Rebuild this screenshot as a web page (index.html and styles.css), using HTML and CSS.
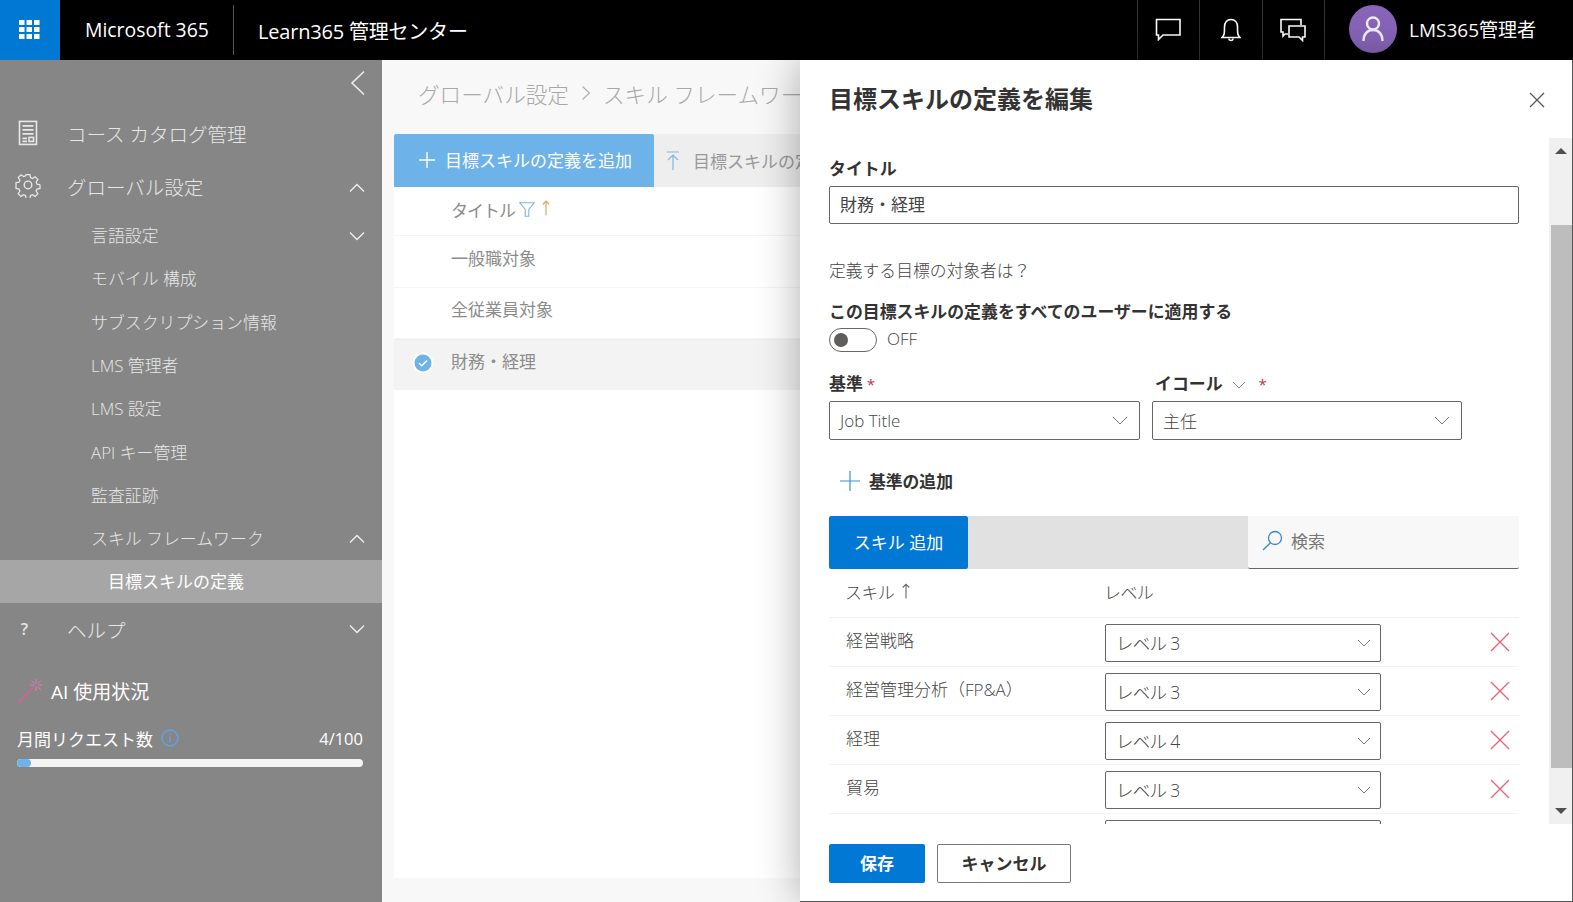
FILE: index.html
```html
<!DOCTYPE html>
<html lang="ja">
<head>
<meta charset="utf-8">
<title>Learn365 管理センター</title>
<link rel="stylesheet" href="styles.css">
</head>
<body>
<div class="app">
  <header class="topbar">
    <div class="waffle">
      <svg width="22" height="20" viewBox="0 0 22 20" fill="#fff"><rect x="0" y="0" width="5.5" height="5"/><rect x="7.5" y="0" width="5.5" height="5"/><rect x="15" y="0" width="5.5" height="5"/><rect x="0" y="7" width="5.5" height="5"/><rect x="7.5" y="7" width="5.5" height="5"/><rect x="15" y="7" width="5.5" height="5"/><rect x="0" y="14" width="5.5" height="5"/><rect x="7.5" y="14" width="5.5" height="5"/><rect x="15" y="14" width="5.5" height="5"/></svg>
    </div>
    <div class="brand">Microsoft 365</div>
    <div class="appname">Learn365 管理センター</div>
    <div class="topicons">
      <div class="topicon"><svg width="26" height="24" viewBox="0 0 26 24" fill="none" stroke="#fff" stroke-width="1.6"><path d="M1.500 1.500H25V17H8L3.500 21.500V17H1.500Z"/></svg></div>
      <div class="topicon"><svg width="20" height="24" viewBox="0 0 20 24" fill="none" stroke="#fff" stroke-width="1.6"><path d="M1 19.500C3.500 17.500 3.500 15 3.500 9C3.500 4.500 6 1.500 10 1.500S16.500 4.500 16.500 9C16.500 15 16.500 17.500 19 19.500Z"/><path d="M8 20.500a2 2 0 0 0 4 0"/></svg></div>
      <div class="topicon"><svg width="26" height="24" viewBox="0 0 26 24" fill="none" stroke="#fff" stroke-width="1.600"><path d="M8 16H5L3 18V14H1V1.500H21V7"/><path d="M9 8H25V19H22.500V22.500L19 19H9Z"/></svg></div>
      <div class="profile">
        <div class="avatar"><svg width="22" height="26" viewBox="0 0 22 26" fill="none" stroke="#f2eef8" stroke-width="2.400"><circle cx="11" cy="7.500" r="6"/><path d="M1.500 25C1.500 18 5.500 14 11 14S20.500 18 20.500 25"/></svg></div>
        <span>LMS365管理者</span>
      </div>
    </div>
  </header>

  <div class="workspace">
    <nav class="sidebar">
      <div class="collapse"><svg width="16" height="26" viewBox="0 0 16 26" fill="none" stroke="#f0f0f0" stroke-width="1.500"><path d="M14 1.500L2 13L14 24.500"/></svg></div>
      <div class="nav-main">
        <svg class="nav-icon" width="20" height="26" viewBox="0 0 20 26" fill="none" stroke="#e8e8e8" stroke-width="1.600"><rect x="1.500" y="1.500" width="17" height="23"/><path d="M4.500 6H15.500M4.500 10H15.500M4.500 14H15.500M4.500 18.500H9M4.500 21.500H9"/><rect x="11" y="17.500" width="4.500" height="4"/></svg>
        <span>コース カタログ管理</span>
      </div>
      <div class="nav-main">
        <svg class="nav-icon" width="26" height="26" viewBox="0 0 24 24" fill="none" stroke="#e8e8e8" stroke-width="1.300"><circle cx="12" cy="12" r="3.500"/><path d="M10 1.500h4l.6 3.100 2 .9 2.700-1.800 2.800 2.800-1.800 2.700.9 2 3.100.6v-.3 4.200l-3.100.6-.9 2 1.800 2.700-2.800 2.800-2.700-1.800-2 .9-.6 3.100h-4l-.6-3.100-2-.9-2.700 1.800-2.800-2.800 1.800-2.700-.9-2-3.100-.6V9.800l3.100-.6.9-2L2 4.500l2.800-2.800 2.700 1.800 2-.9z" transform="translate(1.200 1.200) scale(.9)"/></svg>
        <span>グローバル設定</span>
        <svg class="chev" width="16" height="10" viewBox="0 0 16 10"><path d="M1 8.500L8 1.500L15 8.500"/></svg>
      </div>
      <div class="nav-sub"><span>言語設定</span><svg class="chev" width="16" height="10" viewBox="0 0 16 10"><path d="M1 1.500L8 8.500L15 1.500"/></svg></div>
      <div class="nav-sub"><span>モバイル 構成</span></div>
      <div class="nav-sub"><span>サブスクリプション情報</span></div>
      <div class="nav-sub"><span>LMS 管理者</span></div>
      <div class="nav-sub"><span>LMS 設定</span></div>
      <div class="nav-sub"><span>API キー管理</span></div>
      <div class="nav-sub"><span>監査証跡</span></div>
      <div class="nav-sub"><span>スキル フレームワーク</span><svg class="chev" width="16" height="10" viewBox="0 0 16 10"><path d="M1 8.500L8 1.500L15 8.500"/></svg></div>
      <div class="nav-active">目標スキルの定義</div>
      <div class="nav-main nav-help">
        <span class="nav-q">?</span>
        <span>ヘルプ</span>
        <svg class="chev" width="16" height="10" viewBox="0 0 16 10"><path d="M1 1.500L8 8.500L15 1.500"/></svg>
      </div>
      <div class="ai-title">
        <svg width="26" height="26" viewBox="0 0 26 26" fill="none"><path d="M1 25L17 9" stroke="#c9669c" stroke-width="1.800"/><path d="M19 1v5M19 8v5M12.500 7h5M21 7h4.500M14.500 2.500l3 3M21 9l3 3M24 2.500l-3 3" stroke="#d77fb0" stroke-width="1"/></svg>
        <span>AI 使用状況</span>
      </div>
      <div class="usage-row">
        <span>月間リクエスト数</span>
        <svg class="info" width="18" height="18" viewBox="0 0 18 18" fill="none" stroke="#5da5ea" stroke-width="1.300"><circle cx="9" cy="9" r="8"/><path d="M9 7.500V13.500M9 4.500V6"/></svg>
        <span class="usage-num">4/100</span>
      </div>
      <div class="usage-bar"><div class="usage-fill"></div></div>
    </nav>

    <main class="main">
      <div class="crumbs">
        <span>グローバル設定</span>
        <svg width="10" height="16" viewBox="0 0 10 16" fill="none" stroke="#b0b0b0" stroke-width="1.200"><path d="M1.500 1.500L8.500 8L1.500 14.500"/></svg>
        <span>スキル フレームワーク</span>
      </div>
      <div class="toolbar">
        <div class="add-btn">
          <svg width="16" height="16" viewBox="0 0 16 16" stroke="#fff" stroke-width="1.400"><path d="M8 0V16M0 8H16"/></svg>
          <span>目標スキルの定義を追加</span>
        </div>
        <div class="export">
          <svg width="12" height="20" viewBox="0 0 12 20" fill="none" stroke="#86b5e4" stroke-width="1.200"><path d="M0 1H12M6 19V4M1 9L6 4L11 9"/></svg>
          <span>目標スキルの定義</span>
        </div>
      </div>
      <div class="list">
        <div class="list-row list-head">
          <span class="head-title">タイトル</span>
          <svg width="16" height="15" viewBox="0 0 16 15" fill="none" stroke="#7fb2e6" stroke-width="1.100"><path d="M.8.800H15.200L9.800 7.500V14.200H6.200V7.500Z"/></svg>
          <svg class="sort-up" width="8" height="16" viewBox="0 0 8 16" fill="none" stroke="#d9aa62" stroke-width="1.200"><path d="M4 15.500V1.200M.8 4.500L4 1.200L7.200 4.500"/></svg>
        </div>
        <div class="list-row">一般職対象</div>
        <div class="list-row">全従業員対象</div>
        <div class="list-row list-selected">
          <svg class="check" width="22" height="22" viewBox="0 0 22 22"><circle cx="11" cy="11" r="10.500" fill="#fff"/><circle cx="11" cy="11" r="8.500" fill="#6db2e8"/><path d="M7 11.200L9.800 13.800L15 8.500" fill="none" stroke="#fff" stroke-width="1.500"/></svg>
          財務・経理
        </div>
      </div>
    </main>
  </div>

  <aside class="panel">
    <div class="panel-head">
      <h1>目標スキルの定義を編集</h1>
      <svg class="close" width="16" height="16" viewBox="0 0 16 16" fill="none" stroke="#555" stroke-width="1.200"><path d="M1 1L15 15M15 1L1 15"/></svg>
    </div>
    <div class="panel-scroll">
      <div class="form">
        <label class="label title-label">タイトル</label>
        <div class="input">財務・経理</div>
        <p class="question">定義する目標の対象者は？</p>
        <div class="label apply-label">この目標スキルの定義をすべてのユーザーに適用する</div>
        <div class="toggle-row">
          <div class="toggle"><div class="knob"></div></div>
          <span>OFF</span>
        </div>
        <div class="criteria">
          <div class="crit-col">
            <div class="label crit-label">基準 <span class="req">*</span></div>
            <div class="select"><span>Job Title</span><svg class="sel-chev" width="16" height="9" viewBox="0 0 16 9"><path d="M1 1L8 8L15 1"/></svg></div>
          </div>
          <div class="crit-col crit-col-eq">
            <div class="label crit-label crit-label-eq">イコール <svg class="eq-chev" width="14" height="8" viewBox="0 0 14 8"><path d="M1 1L7 7L13 1"/></svg><span class="req">*</span></div>
            <div class="select"><span>主任</span><svg class="sel-chev" width="16" height="9" viewBox="0 0 16 9"><path d="M1 1L8 8L15 1"/></svg></div>
          </div>
        </div>
        <div class="add-crit">
          <svg width="20" height="20" viewBox="0 0 20 20" stroke="#3d8fd6" stroke-width="1.200"><path d="M10 0V20M0 10H20"/></svg>
          <span>基準の追加</span>
        </div>
        <div class="skill-bar">
          <div class="skill-add">スキル 追加</div>
          <div class="skill-gap"></div>
          <div class="skill-search">
            <svg width="21" height="21" viewBox="0 0 21 21" fill="none" stroke="#2f8ad2" stroke-width="1.300"><circle cx="13" cy="8" r="6.500"/><path d="M8.500 12.800L1 20"/></svg>
            <span>検索</span>
          </div>
        </div>
        <div class="skill-head">
          <div class="col-skill"><span class="tight">スキル</span> <svg width="8" height="16" viewBox="0 0 8 16" fill="none" stroke="#666" stroke-width="1.100"><path d="M4 15.500V1.200M.8 4.500L4 1.200L7.200 4.500"/></svg></div>
          <div class="col-level tight">レベル</div>
        </div>
        <div class="skill-row">
          <div class="col-skill">経営戦略</div>
          <div class="level"><span>レベル 3</span><svg class="sel-chev" width="14" height="8" viewBox="0 0 14 8"><path d="M1 1L7 7L13 1"/></svg></div>
          <svg class="del" width="20" height="20" viewBox="0 0 20 20" fill="none" stroke="#ec5f70" stroke-width="1.300"><path d="M1 1L19 19M19 1L1 19"/></svg>
        </div>
        <div class="skill-row">
          <div class="col-skill">経営管理分析（FP&amp;A）</div>
          <div class="level"><span>レベル 3</span><svg class="sel-chev" width="14" height="8" viewBox="0 0 14 8"><path d="M1 1L7 7L13 1"/></svg></div>
          <svg class="del" width="20" height="20" viewBox="0 0 20 20" fill="none" stroke="#ec5f70" stroke-width="1.300"><path d="M1 1L19 19M19 1L1 19"/></svg>
        </div>
        <div class="skill-row">
          <div class="col-skill">経理</div>
          <div class="level"><span>レベル 4</span><svg class="sel-chev" width="14" height="8" viewBox="0 0 14 8"><path d="M1 1L7 7L13 1"/></svg></div>
          <svg class="del" width="20" height="20" viewBox="0 0 20 20" fill="none" stroke="#ec5f70" stroke-width="1.300"><path d="M1 1L19 19M19 1L1 19"/></svg>
        </div>
        <div class="skill-row">
          <div class="col-skill">貿易</div>
          <div class="level"><span>レベル 3</span><svg class="sel-chev" width="14" height="8" viewBox="0 0 14 8"><path d="M1 1L7 7L13 1"/></svg></div>
          <svg class="del" width="20" height="20" viewBox="0 0 20 20" fill="none" stroke="#ec5f70" stroke-width="1.300"><path d="M1 1L19 19M19 1L1 19"/></svg>
        </div>
        <div class="skill-row">
          <div class="col-skill"></div>
          <div class="level"></div>
        </div>
      </div>
      <div class="scrollbar">
        <div class="arrow-up"></div>
        <div class="thumb"></div>
        <div class="arrow-down"></div>
      </div>
    </div>
    <div class="panel-foot">
      <div class="btn-save">保存</div>
      <div class="btn-cancel">キャンセル</div>
    </div>
  </aside>
</div>
</body>
</html>
```

FILE: styles.css
```css
* { box-sizing: border-box; }
html, body { margin: 0; height: 100%; }
body {
  font-family: "Open Sans", "Noto Sans CJK JP", sans-serif;
  overflow: hidden;
  background: #fff;
}
svg { flex: none; }
.app {
  position: relative;
  width: 1573px;
  height: 902px;
  display: flex;
  flex-direction: column;
  overflow: hidden;
}

/* top bar */
.topbar {
  height: 60px;
  flex: none;
  background: #000;
  color: #fff;
  display: flex;
  align-items: center;
}
.waffle {
  width: 60px;
  height: 60px;
  background: #0078d4;
  display: flex;
  align-items: center;
  justify-content: center;
}
.brand {
  width: 174px;
  height: 50px;
  padding-left: 25px;
  font-size: 19.400px;
  line-height: 50px;
  border-right: 1px solid #555;
}
.appname {
  padding-left: 24px;
  font-size: 20px;
  letter-spacing: -.2px;
}
.topicons {
  margin-left: auto;
  display: flex;
  height: 60px;
  padding-right: 1px;
}
.topicon {
  width: 62.500px;
  display: flex;
  align-items: center;
  justify-content: center;
  border-left: 1px solid #333;
}
.profile {
  width: 248px;
  padding-left: 24px;
  display: flex;
  align-items: center;
  gap: 12px;
  border-left: 1px solid #333;
  font-size: 19px;
}
.profile span { padding-bottom: 3px; }
.avatar {
  width: 48px;
  height: 48px;
  border-radius: 50%;
  background: #8764b8;
  display: flex;
  align-items: center;
  justify-content: center;
  margin-bottom: 2px;
}

/* workspace */
.workspace {
  flex: 1;
  display: flex;
  min-height: 0;
}
.sidebar {
  width: 382px;
  flex: none;
  background: #868686;
  color: #e6e6e6;
}
.collapse {
  height: 49px;
  padding: 10px 16px 0 0;
  display: flex;
  justify-content: flex-end;
}
.nav-main {
  height: 52.500px;
  display: flex;
  align-items: center;
  padding: 0 17px 0 0;
  font-size: 19.500px;
  font-weight: 300;
  position: relative;
}
.nav-main > span:not(.nav-q) { margin-left: 67px; padding-bottom: 3px; }
.nav-main .nav-icon {
  position: absolute;
  left: 15px;
  top: 50%;
  transform: translateY(-62%);
}
.nav-main svg.nav-icon[width="20"] { left: 18px; transform: translateY(-58%); }
.chev {
  margin-left: auto;
  fill: none;
  stroke: #f0f0f0;
  stroke-width: 1.300;
}
.nav-sub {
  height: 43.300px;
  display: flex;
  align-items: center;
  padding: 0 17px 0 91px;
  font-size: 16.900px;
  font-weight: 300;
}
.nav-sub span { padding-bottom: 2px; }
.nav-active {
  height: 43px;
  padding-left: 108px;
  background: #a6a6a6;
  color: #fff;
  font-size: 17px;
  line-height: 43px;
}
.nav-help { height: 52px; }
.nav-help > span:not(.nav-q) { margin-left: 39px; padding-bottom: 0; }
.nav-q {
  width: 28px;
  text-align: right;
  font-size: 16px;
  font-weight: 600;
}
.ai-title {
  margin: 18px 0 0 17px;
  height: 36px;
  display: flex;
  align-items: center;
  gap: 8px;
  color: #fff;
  font-size: 19px;
}
.usage-row {
  margin: 17px 19px 0 17px;
  height: 24px;
  display: flex;
  align-items: center;
  gap: 8px;
  color: #fff;
  font-size: 17px;
}
.usage-num { margin-left: auto; font-size: 16.500px; }
.usage-bar {
  margin: 9px 19px 0 17px;
  height: 8px;
  border-radius: 4px;
  background: #f4f4f4;
  overflow: hidden;
}
.usage-fill {
  width: 14px;
  height: 8px;
  border-radius: 4px;
  background: #6db2e8;
}

/* main */
.main {
  width: 418px;
  flex: none;
  overflow: hidden;
  background: #f8f8f8;
  padding: 0 0 24px 12px;
  display: flex;
  flex-direction: column;
}
.crumbs {
  height: 74px;
  flex: none;
  padding: 0 0 8px 24px;
  display: flex;
  align-items: center;
  gap: 12px;
  color: #a8a8a8;
  font-size: 21.600px;
  font-weight: 300;
  white-space: nowrap;
}
.toolbar {
  height: 53px;
  flex: none;
  display: flex;
  background: #eeeeee;
}
.add-btn {
  width: 260px;
  flex: none;
  background: #6db2e8;
  color: #fff;
  border-radius: 2px 2px 0 0;
  display: flex;
  align-items: center;
  gap: 10px;
  padding: 0 0 2px 25px;
  font-size: 17px;
  white-space: nowrap;
}
.export {
  display: flex;
  align-items: center;
  gap: 14px;
  padding-left: 13px;
  color: #999;
  font-size: 17px;
  white-space: nowrap;
}
.list {
  flex: 1;
  background: #fff;
}
.list-row {
  height: 51.500px;
  display: flex;
  align-items: center;
  padding: 0 0 8px 57px;
  color: #8c8c8c;
  font-size: 17px;
  border-bottom: 1px solid #f5f5f5;
  position: relative;
}
.list-head { height: 49px; gap: 4px; padding-bottom: 4px; }
.head-title { letter-spacing: -1px; }
.sort-up { margin: 0 0 2px 3px; }
.list-selected {
  height: 51px;
  padding-bottom: 10px;
  background: #f3f3f3;
  border-bottom: 0;
  border-top: 1px solid #eee;
}
.check {
  position: absolute;
  left: 18px;
  top: 12px;
}

/* panel */
.panel {
  position: absolute;
  left: 800px;
  top: 60px;
  width: 772px;
  height: 841px;
  background: #fff;
  box-shadow: 0 0 40px rgba(0, 0, 0, .32);
  display: flex;
  flex-direction: column;
}
.app::after {
  content: "";
  position: absolute;
  left: 800px;
  right: 0;
  bottom: 0;
  height: 1px;
  background: #555;
}
.panel::after {
  content: "";
  position: absolute;
  right: -1px;
  top: 0;
  bottom: -1px;
  width: 1px;
  background: #555;
}
.panel-head {
  height: 78px;
  flex: none;
  padding: 0 27px 0 29px;
  display: flex;
  justify-content: space-between;
}
.panel-head h1 {
  margin: 22px 0 0;
  font-size: 24px;
  line-height: 34px;
  font-weight: 700;
  color: #333;
}
.close { margin-top: 32px; }
.panel-scroll {
  flex: 1;
  min-height: 0;
  display: flex;
  overflow: hidden;
}
.form {
  width: 720px;
  margin-left: 29px;
  color: #444;
  flex: none;
}
.label {
  font-weight: 700;
  font-size: 16.900px;
  color: #333;
}
.title-label { display: block; line-height: 24px; padding-top: 19px; height: 48px; }
.input {
  width: 690px;
  height: 38px;
  border: 1px solid #666;
  border-radius: 2px;
  padding-left: 10px;
  font-size: 17px;
  line-height: 36px;
}
.question {
  margin: 35px 0 0;
  height: 24px;
  line-height: 24px;
  font-size: 16.800px;
  font-weight: 300;
}
.apply-label { margin-top: 17px; line-height: 24px; }
.toggle-row {
  margin-top: 4px;
  height: 24px;
  display: flex;
  align-items: center;
  gap: 10px;
  font-size: 17px;
  font-weight: 300;
}
.toggle-row span { padding-bottom: 3px; }
.toggle {
  width: 48px;
  height: 24px;
  border: 1px solid #666;
  border-radius: 12px;
  padding: 4px 0 0 4px;
}
.knob {
  width: 14px;
  height: 14px;
  border-radius: 50%;
  background: #605e5c;
}
.criteria {
  margin-top: 20px;
  display: flex;
  gap: 12px;
}
.crit-col { width: 311px; }
.crit-col-eq { width: 310px; }
.crit-label { height: 29px; line-height: 24px; display: flex; align-items: baseline; gap: 4px; }
.crit-label-eq { padding-left: 3px; }
.eq-chev {
  fill: none;
  stroke: #888;
  margin: 0 9px 4px 5px;
  align-self: center;
}
.req { color: #c4314b; font-weight: 400; font-size: 15px; }
.select {
  height: 39px;
  border: 1px solid #666;
  border-radius: 2px;
  padding: 0 11px 0 10px;
  display: flex;
  align-items: center;
  justify-content: space-between;
  font-size: 17px;
  font-weight: 300;
}
.add-crit {
  margin: 31px 0 0 11px;
  height: 20px;
  display: flex;
  align-items: center;
  gap: 9px;
  font-size: 16.800px;
  font-weight: 700;
  color: #333;
}
.sel-chev {
  fill: none;
  stroke: #777;
  stroke-width: 1;
}
.skill-bar {
  margin-top: 25px;
  width: 690px;
  height: 53px;
  display: flex;
}
.skill-add {
  width: 139px;
  background: #0078d4;
  color: #fff;
  border-radius: 2px;
  text-align: center;
  font-size: 17px;
  line-height: 53px;
}
.skill-gap { flex: 1; background: #e1e1e1; }
.skill-search {
  width: 271px;
  background: #f8f8f8;
  border-bottom: 1px solid #666;
  border-radius: 0 0 2px 2px;
  display: flex;
  align-items: center;
  gap: 8px;
  padding: 0 0 4px 14px;
  color: #777;
  font-size: 17px;
}
.skill-head, .skill-row {
  width: 690px;
  display: flex;
  align-items: center;
  position: relative;
}
.skill-head {
  height: 49px;
  border-bottom: 1px solid #f2f2f2;
  font-size: 17px;
  font-weight: 300;
}
.skill-row {
  height: 49px;
  border-bottom: 1px solid #f2f2f2;
  font-size: 17px;
  font-weight: 300;
}
.col-skill {
  width: 275px;
  padding-left: 16px;
  display: flex;
  align-items: center;
  gap: 8px;
  padding-bottom: 4px;
}
.skill-row .col-skill { width: 276px; padding: 0 0 6px 17px; }
.col-level { padding-bottom: 4px; }
.tight { letter-spacing: -.6px; }
.level {
  width: 276px;
  height: 38px;
  margin-top: 2px;
  border: 1px solid #666;
  border-radius: 2px;
  padding: 0 9px 0 10px;
  display: flex;
  align-items: center;
  justify-content: space-between;
  font-size: 17.500px;
  letter-spacing: -.7px;
}
.level span { padding-bottom: 2px; }
.del {
  position: absolute;
  left: 661px;
  top: 14px;
}
.scrollbar {
  width: 24px;
  background: #f0f0f0;
  position: relative;
  flex: none;
  margin-left: auto;
  display: flex;
  flex-direction: column;
  align-items: center;
}
.arrow-up {
  margin-top: 10px;
  border: 6px solid transparent;
  border-top: 0;
  border-bottom: 6px solid #505050;
}
.thumb {
  width: 21px;
  height: 543px;
  margin-top: 71px;
  background: #bdbdbd;
}
.arrow-down {
  margin-top: 40px;
  border: 6px solid transparent;
  border-bottom: 0;
  border-top: 6px solid #505050;
}
.panel-foot {
  height: 77px;
  flex: none;
  padding: 20px 0 0 29px;
  display: flex;
  align-items: flex-start;
  gap: 12px;
}
.btn-save, .btn-cancel {
  height: 39px;
  border-radius: 2px;
  text-align: center;
  font-size: 17px;
  font-weight: 700;
  line-height: 37px;
}
.btn-save {
  width: 96px;
  background: #0078d4;
  color: #fff;
  line-height: 39px;
}
.btn-cancel {
  width: 134px;
  border: 1px solid #777;
  color: #333;
}
```
